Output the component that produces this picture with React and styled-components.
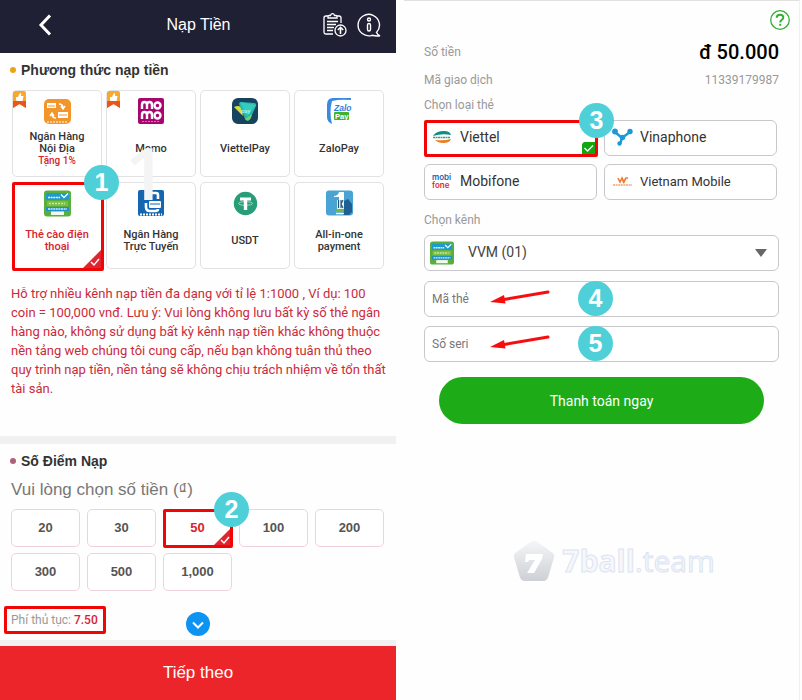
import React, { useState } from "react";
import styled, { createGlobalStyle, css } from "styled-components";

const GlobalStyle = createGlobalStyle`
  * {
    box-sizing: border-box;
  }
  body {
    margin: 0;
    background: #fefefe;
    font-family: "Liberation Sans", Arial, sans-serif;
  }
  button, input, select {
    font-family: inherit;
  }
`;

//LAYOUT
const Page = styled.main`
  display: grid;
  grid-template-columns: 1fr 1fr;
  gap: 8px;
  min-height: 100vh;
  padding-right: 2px;
`;

const DepositPanel = styled.section`
  display: flex;
  flex-direction: column;
`;

const CardPanel = styled.section`
  font-family: Roboto, sans-serif;
  border-top: 1px solid #e2dfe0;
  border-right: 1px solid #f1f1f3;
  padding: 9px 0 0 20px;
`;

//HEADER
const Header = styled.header`
  display: grid;
  grid-template-columns: 1fr auto 1fr;
  align-items: center;
  height: 53px;
  padding: 0 15px 4px 34px;
  background: #1f2034;
  color: #fff;
`;

const Title = styled.h1`
  margin: 0;
  padding-right: 18px;
  font-size: 16px;
  font-weight: 400;
`;

const IconButton = styled.button`
  display: flex;
  padding: 0;
  border: none;
  background: none;
  color: inherit;
  cursor: pointer;
`;

const HeaderActions = styled.div`
  display: flex;
  justify-content: flex-end;
  gap: 10px;
`;

//DEPOSIT PANEL
const Heading = styled.h2`
  display: flex;
  align-items: center;
  gap: 5px;
  margin: 0;
  padding: 0 10px;
  font-size: 14px;
  line-height: 20px;
  color: #333;

  &::before {
    content: "";
    width: 6px;
    height: 6px;
    border-radius: 50%;
    background: ${(props) => props.$dot};
  }
`;

const Block = styled.div`
  padding-top: ${(props) => props.$top}px;
`;

const MethodGrid = styled.div`
  position: relative;
  display: grid;
  grid-template-columns: repeat(4, 1fr);
  grid-auto-rows: 87px;
  gap: 5px 4px;
  padding: 10px 12px 0;
`;

const Tile = styled.button`
  position: relative;
  display: flex;
  flex-direction: column;
  align-items: center;
  padding: 7px 4px 3px;
  border: 1px solid #e2e2e4;
  border-radius: 5px;
  background: #fff;
  color: ${(props) => (props.$selected ? "#d8232f" : "#333")};
  font-family: Roboto, sans-serif;
  font-size: 11px;
  font-weight: 500;
  line-height: 12px;
  cursor: pointer;
`;

const TileLabel = styled.span`
  display: flex;
  flex-direction: column;
  justify-content: center;
  flex: 1;
  white-space: pre-line;
`;

const Promo = styled.span`
  font-size: 10px;
  color: #d8232f;
`;

const Ribbon = styled.svg`
  position: absolute;
  top: 0;
  left: 0;
`;

const Outline = styled.span`
  position: absolute;
  z-index: 1;
  top: -1px;
  left: -1px;
  right: ${(props) => props.$spread}px;
  bottom: ${(props) => props.$spread}px;
  border: 3px solid #f20505;
  border-radius: 2px;
  pointer-events: none;
`;

const Corner = styled.svg`
  position: absolute;
  right: 0;
  bottom: 0;
`;

const stepAtCorner = css`
  top: -18px;
  right: -18px;
`;

const stepInField = css`
  top: 0;
  left: 154px;
`;

const Step = styled.span`
  position: absolute;
  z-index: 2;
  ${(props) => (props.$inField ? stepInField : stepAtCorner)}
  width: 35px;
  height: 35px;
  border-radius: 50%;
  background: #4fd0d9;
  color: #fff;
  font-family: "Liberation Sans", Arial, sans-serif;
  font-size: 25px;
  font-weight: 700;
  line-height: 35px;
  text-align: center;
`;

const GhostMark = styled.span`
  position: absolute;
  z-index: 1;
  top: 52px;
  left: 125px;
  color: #f4f4f5;
  font-family: "Open Sans", sans-serif;
  font-size: 72px;
  font-weight: 600;
  line-height: 80px;
  pointer-events: none;
`;

const Notice = styled.p`
  margin: 0;
  padding: 15px 10px 38px 11px;
  font-family: Roboto, sans-serif;
  font-size: 13px;
  line-height: 19px;
  color: #cc2a3b;
`;

const Divider = styled.div`
  height: ${(props) => props.$size}px;
  background: #f1f1f1;
`;

const Prompt = styled.p`
  margin: 0;
  padding: 8px 11px;
  font-size: 17px;
  line-height: 22px;
  color: #777;
`;

const AmountGrid = styled.div`
  display: grid;
  grid-template-columns: repeat(5, 1fr);
  grid-auto-rows: 38px;
  gap: 6px 7px;
  padding: 0 12px 0 11px;
`;

const Amount = styled.button`
  position: relative;
  padding: 0 0 2px;
  border: 1px solid #f0d3da;
  border-radius: 5px;
  background: #fff;
  color: ${(props) => (props.$selected ? "#d8232f" : "#555")};
  font-size: 13px;
  font-weight: 700;
  cursor: pointer;
`;

const FeeRow = styled.div`
  display: grid;
  grid-template-columns: 1fr auto 1fr;
  align-items: start;
  padding: 15px 4px 4px;
`;

const Fee = styled.p`
  justify-self: start;
  margin: 0;
  padding: 0 5px 0 4px;
  border: 3px solid #f20505;
  border-radius: 2px;
  font-family: Roboto, sans-serif;
  font-size: 12px;
  line-height: 22px;
  color: #999;

  b {
    font-weight: 500;
    color: #d8232f;
  }
`;

const MoreButton = styled(IconButton)`
  margin-top: 6px;
`;

const NextButton = styled.button`
  flex: 1;
  min-height: 54px;
  padding: 0;
  border: none;
  background: #eb2529;
  color: #fff;
  font-size: 17px;
  cursor: pointer;
`;

//CARD PANEL
const HelpRow = styled.div`
  display: flex;
  justify-content: flex-end;
  padding-right: 9px;
`;

const InfoRow = styled.div`
  display: flex;
  justify-content: space-between;
  align-items: center;
  height: 28px;
  padding-right: 20px;
  font-size: 12px;
  color: #999;
`;

const Total = styled.strong`
  font-size: 20px;
  font-weight: 500;
  color: #000;
`;

const Caption = styled.div`
  display: block;
  padding: ${(props) => props.$top}px 0 4px;
  font-size: 12px;
  line-height: 22px;
  color: #999;
`;

const Fields = styled.div`
  padding-right: 20px;
`;

const CarrierGrid = styled.div`
  display: grid;
  grid-template-columns: 1fr 1fr;
  gap: 8px 7px;
  padding-right: 2px;
`;

const Carrier = styled.button`
  position: relative;
  display: flex;
  align-items: center;
  gap: 6px;
  height: 36px;
  padding: 0 6px 2px;
  border: 1px solid #c8c8cc;
  border-radius: 6px;
  background: #fff;
  color: #333;
  font-size: ${(props) => (props.$small ? 13 : 14)}px;
  cursor: pointer;
`;

const CheckMark = styled.svg`
  position: absolute;
  right: 1px;
  bottom: 1px;
`;

const SelectBox = styled.div`
  position: relative;
`;

const ChannelSelect = styled.select`
  appearance: none;
  display: block;
  width: 100%;
  height: 36px;
  padding: 0 40px 2px 43px;
  border: 1px solid #c8c8cc;
  border-radius: 6px;
  background: #fff;
  color: #444;
  font-size: 14px;
`;

const ChannelIcon = styled.span`
  position: absolute;
  top: 6px;
  left: 6px;
  pointer-events: none;
`;

const Caret = styled.svg`
  position: absolute;
  top: 14px;
  right: 12px;
  pointer-events: none;
`;

const FieldBox = styled.div`
  position: relative;
  margin-top: ${(props) => props.$gap}px;
`;

const TextField = styled.input`
  display: block;
  width: 100%;
  height: 36px;
  padding: 0 7px;
  border: 1px solid #c8c8cc;
  border-radius: 6px;
  background: #fff;
  font-size: 12px;

  &::placeholder {
    color: #777;
  }
`;

const Arrow = styled.svg`
  position: absolute;
  top: 8px;
  left: 66px;
  pointer-events: none;
`;

const PayButton = styled.button`
  display: block;
  width: calc(100% - 30px);
  height: 47px;
  margin: 15px auto 0;
  border: none;
  border-radius: 24px;
  background: #1dac18;
  color: #fff;
  font-size: 14px;
  cursor: pointer;
`;

const Watermark = styled.div`
  display: flex;
  justify-content: center;
  align-items: center;
  gap: 6px;
  padding: 115px 0 0 24px;
  color: #f5f7fb;
  font-family: "Open Sans", sans-serif;
  font-size: 30px;
  line-height: 44px;
  -webkit-text-stroke: 1px #dde4f1;

  b {
    font-weight: 700;
  }
`;

//ICONS
const BankIcon = () => (
  <svg width="27" height="27" viewBox="0 0 27 27">
    <rect y="1" width="27" height="25" rx="5" fill="#f2962b" />
    <path d="M3 5h9v5H3zM14 14h10v6H14z" fill="#fff" />
    <path d="M4 8h7M15 17h8" stroke="#f2962b" />
    <path d="M15 6q4 0 4 4m-2-2l2 3 2-3M12 20q-4 0-4-4m-2 2l2-3 2 3" fill="none" stroke="#fff" strokeWidth="1.4" />
    <path d="M3 24h21" stroke="#fbdcb5" strokeWidth="1.5" strokeDasharray="2 1" />
  </svg>
);

const MomoIcon = () => (
  <svg width="27" height="27" viewBox="0 0 27 27">
    <rect width="26" height="26" rx="2" fill="#a9056f" />
    <g fill="none" stroke="#fff" strokeWidth="2.4">
      <path d="M4 11V7q0-3 2.500-3T9 7v4M9 7q0-3 2.500-3T14 7v4" />
      <circle cx="19.500" cy="7.500" r="3" />
      <path d="M4 21v-4q0-3 2.500-3T9 17v4M9 17q0-3 2.500-3t2.500 3v4" />
      <circle cx="19.500" cy="17.500" r="3" />
    </g>
    <path d="M4 23.500h18" stroke="#d673b4" strokeDasharray="2 1" />
  </svg>
);

const ViettelPayIcon = () => (
  <svg width="27" height="27" viewBox="0 0 27 27">
    <rect width="26" height="26" rx="6" fill="#17435f" />
    <path d="M2 9q4-2 7 0l2 9z" fill="#d8dc3a" />
    <path d="M7 6q0-2 2-2l13 1q3 0 2 3l-6 13q-2 3-5 0z" fill="#23b9ac" />
    <path d="M8 4l16 3-9 11z" fill="#3fd8ca" opacity=".6" />
    <path d="M13 21q3 4 6-1l1-4z" fill="#6fd15f" />
    <text x="9" y="15" fontSize="6" fontFamily="Roboto" fill="#b9f3ee">pay</text>
  </svg>
);

const ZaloIcon = () => (
  <svg width="27" height="27" viewBox="0 0 27 27">
    <path d="M25 0H7Q1 0 1 7v12q0 5 5 7Q3 14 6 3q8-2 19-1z" fill="#3a8be0" />
    <text x="8" y="12.500" fontSize="8.500" fontWeight="700" fontStyle="italic" fontFamily="Liberation Sans" fill="#2d7fdc">Zalo</text>
    <rect x="8" y="14" width="15" height="8" rx="1" fill="#3fb02f" />
    <text x="9" y="20.500" fontSize="7.500" fontWeight="700" fontFamily="Liberation Sans" fill="#fff">Pay</text>
  </svg>
);

const PhoneCardIcon = ({ size = 27 }) => (
  <svg width={size} height={size} viewBox="0 0 27 27">
    <rect y=".5" width="27" height="26" rx="3" fill="#5aae3c" />
    <rect x="2" y="3" width="23" height="7" fill="#1d9bd0" />
    <path d="M4 7.500h12" stroke="#e2f5fb" strokeWidth="1.600" strokeDasharray="2 .6" />
    <path d="M17 4.500l3 3 4-4" fill="none" stroke="#fff" strokeWidth="1.300" />
    <rect x="3" y="11" width="21" height="5" rx="1" fill="#79bf48" />
    <path d="M5 13.500h16" stroke="#c9e7a9" strokeWidth="1.500" strokeDasharray="2 1" />
    <rect x="2" y="17" width="23" height="4" fill="#1b91c8" />
    <path d="M4 19h19" stroke="#d6eefa" strokeWidth="1.500" strokeDasharray="2 .6" />
    <rect x="7" y="21.500" width="13" height="3.500" fill="#f1fbe9" />
  </svg>
);

const OnlineIcon = () => (
  <svg width="27" height="27" viewBox="0 0 27 27">
    <rect width="26" height="26" rx="2" fill="#1466b0" />
    <path d="M10 9V6q0-3 3-3h5q2 0 2 2v4M8 13v4q0 4 4 4h5q3 0 3-2" fill="none" stroke="#fff" strokeWidth="2.600" />
    <rect x="11" y="11" width="12" height="7" rx="1" fill="#fff" />
    <path d="M12 14h10" stroke="#1466b0" />
    <path d="M2 24.500h22" stroke="#fff" strokeWidth="2" strokeDasharray="2 1" />
  </svg>
);

const UsdtIcon = () => (
  <svg width="27" height="27" viewBox="0 0 27 27">
    <circle cx="13.500" cy="13.500" r="11.700" fill="#279e78" />
    <ellipse cx="13.500" cy="13.500" rx="7" ry="1.800" fill="none" stroke="#b9e2d4" strokeWidth=".8" />
    <path d="M8 7.500h11v3h-3.800V20h-3.400v-9.500H8z" fill="#fff" />
  </svg>
);

const AllInOneIcon = () => (
  <svg width="27" height="27" viewBox="0 0 27 27">
    <rect y=".5" width="27" height="25" rx="3" fill="#4aa3d5" />
    <path d="M18 11l4-2 4 5v8l-3 3h-6z" fill="#1f5f94" />
    <path d="M8 6q4 0 5-4h5v8h-5V7H8z" fill="#fff" />
    <rect x="11" y="10" width="7" height="9" fill="#e6f1f8" />
    <path d="M12.500 10v8M15 10v8M17 10l-2 4 2 4" fill="none" stroke="#24506f" strokeWidth="1.100" />
    <rect x="10" y="19" width="8" height="3" fill="#76b73a" />
    <path d="M10 23.500h8" stroke="#fff" strokeWidth="1.500" />
  </svg>
);

const ViettelIcon = () => (
  <svg width="23" height="20" viewBox="0 0 23 20">
    <path d="M2 9q3-5 11-5 6 0 7 4-9-2-18 1z" fill="#118c80" />
    <path d="M20 12q-1 4-8 4-5 0-8-3 9 1 16-1z" fill="#ee7d23" />
    <path d="M2 10.500h17" stroke="#3a9b95" strokeWidth="1.500" strokeDasharray="2 .5" />
  </svg>
);

const VinaIcon = () => (
  <svg width="23" height="20" viewBox="0 0 23 20">
    <path d="M4 5l7 6 8-6M11 11l-2 6" fill="none" stroke="#1b9ad9" strokeWidth="2.400" />
    <g fill="#1b9ad9">
      <circle cx="4" cy="4.500" r="2.900" />
      <circle cx="19" cy="4.500" r="2.700" />
      <circle cx="11.500" cy="10.500" r="2.700" />
      <circle cx="8.500" cy="16.500" r="2.200" />
    </g>
  </svg>
);

const MobifoneIcon = () => (
  <svg width="23" height="20" viewBox="0 0 23 20">
    <text x="1" y="9" fontSize="8" fontWeight="600" fontFamily="Inter" fill="#1c62b0">mobi</text>
    <text x="1" y="17" fontSize="8" fontWeight="600" fontFamily="Inter" fill="#e32636">fone</text>
  </svg>
);

const VietnamMobileIcon = () => (
  <svg width="23" height="20" viewBox="0 0 23 20">
    <path d="M7 7l2 4 2-4 2 4 2-4M11 7l1.500 4L15 7h2" fill="none" stroke="#ee7b30" strokeWidth="1.600" />
    <path d="M2 14h19" stroke="#f0a56f" strokeWidth="1.600" strokeDasharray="2 .6" />
  </svg>
);

const TileCorner = () => (
  <Corner width="18" height="18" viewBox="0 0 18 18">
    <path d="M18 0v18H0z" fill="#e02430" />
    <path d="M8 12l3 3 5-6" fill="none" stroke="#fff" strokeWidth="1.500" />
  </Corner>
);

//DATA
const methods = [
  { id: "bank", label: "Ngân Hàng\nNội Địa", icon: BankIcon, promo: "Tặng 1%", hot: true },
  { id: "momo", label: "Momo", icon: MomoIcon, hot: true },
  { id: "viettelpay", label: "ViettelPay", icon: ViettelPayIcon },
  { id: "zalopay", label: "ZaloPay", icon: ZaloIcon },
  { id: "phone", label: "Thẻ cào điện\nthoại", icon: PhoneCardIcon },
  { id: "online", label: "Ngân Hàng\nTrực Tuyến", icon: OnlineIcon },
  { id: "usdt", label: "USDT", icon: UsdtIcon },
  { id: "all", label: "All-in-one\npayment", icon: AllInOneIcon },
];

const amounts = ["20", "30", "50", "100", "200", "300", "500", "1,000"];

const carriers = [
  { label: "Viettel", icon: ViettelIcon },
  { label: "Vinaphone", icon: VinaIcon },
  { label: "Mobifone", icon: MobifoneIcon },
  { label: "Vietnam Mobile", icon: VietnamMobileIcon, small: true },
];

const DepositForm = () => {
  const [method, setMethod] = useState("phone");
  const [amount, setAmount] = useState("50");

  return (
    <DepositPanel>
      <Header>
        <IconButton aria-label="Quay lại">
          <svg width="20" height="22" viewBox="0 0 20 22" fill="none" stroke="#fff" strokeWidth="3">
            <path d="M16 1.500L7 11l9 9.500" />
          </svg>
        </IconButton>
        <Title>Nạp Tiền</Title>
        <HeaderActions>
          <IconButton aria-label="Lịch sử nạp">
            <svg width="24" height="24" viewBox="0 0 24 24" fill="none" stroke="#fff" strokeWidth="1.300">
              <path d="M10 21H3q-2 0-2-2V5q0-2 2-2h2M14 3h2q2 0 2 2v5" />
              <path d="M5 5V3.500q0-1 1-1h1.500Q8 .7 9.500.7t2 1.800H13q1 0 1 1V5z" />
              <path d="M4 8.500h11M4 11.500h9M4 14.500h7M4 17.500h6" />
              <circle cx="17.500" cy="17.500" r="5.500" />
              <path d="M17.500 21v-6.500M14.800 17l2.700-2.700 2.700 2.700" strokeWidth="1.600" />
            </svg>
          </IconButton>
          <IconButton aria-label="Thông tin">
            <svg width="24" height="24" viewBox="0 0 24 24" fill="none" stroke="#fff" strokeWidth="1.400">
              <path d="M19.500 19.500A10.700 10.700 0 1 0 15 22.300q4 1 8 .5-2.500-1-3.500-3.300z" />
              <circle cx="12" cy="6.500" r="1.500" />
              <rect x="10.500" y="10.500" width="3" height="7.500" rx="1.500" />
            </svg>
          </IconButton>
        </HeaderActions>
      </Header>

      <Block $top={7}>
        <Heading $dot="#eca414">Phương thức nạp tiền</Heading>
        <MethodGrid>
          {methods.map(({ id, label, icon: Icon, promo, hot }) => (
            <Tile key={id} $selected={id === method} onClick={() => setMethod(id)}>
              {hot && (
                <Ribbon width="13" height="17" viewBox="0 0 13 17">
                  <path d="M0 2q0-2 2-2h9q2 0 2 2v15l-6.500-4L0 17z" fill="#f8a92c" />
                  <path d="M0 10h13v7l-6.500-4L0 17z" fill="#ea5420" />
                  <path d="M3 6h2l2-4q1.500 0 1 3h2.500l-1 5H5L3 9.500z" fill="#fff" />
                </Ribbon>
              )}
              <Icon />
              <TileLabel>
                {label}
                {promo && <Promo>{promo}</Promo>}
              </TileLabel>
              {id === method && (
                <>
                  <TileCorner />
                  <Outline $spread={-3} />
                  <Step>1</Step>
                </>
              )}
            </Tile>
          ))}
          <GhostMark>1</GhostMark>
        </MethodGrid>
      </Block>
      <Notice>
        Hỗ trợ nhiều kênh nạp tiền đa dạng với tỉ lệ 1:1000 , Ví dụ: 100 coin = 100,000 vnđ. Lưu ý: Vui lòng
        không lưu bất kỳ số thẻ ngân hàng nào, không sử dụng bất kỳ kênh nạp tiền khác không thuộc nền tảng web
        chúng tôi cung cấp, nếu bạn không tuân thủ theo quy trình nạp tiền, nền tảng sẽ không chịu trách nhiệm
        về tổn thất tài sản.
      </Notice>

      <Divider $size={8} />
      <Block $top={7}>
        <Heading $dot="#b0607f">Số Điểm Nạp</Heading>
        <Prompt>Vui lòng chọn số tiền (₫)</Prompt>
        <AmountGrid>
          {amounts.map((value) => (
            <Amount key={value} $selected={value === amount} onClick={() => setAmount(value)}>
              {value}
              {value === amount && (
                <>
                  <TileCorner />
                  <Outline $spread={-2} />
                  <Step>2</Step>
                </>
              )}
            </Amount>
          ))}
        </AmountGrid>
        <FeeRow>
          <Fee>
            Phí thủ tục: <b>7.50</b>
          </Fee>
          <MoreButton aria-label="Xem thêm">
            <svg width="24" height="24" viewBox="0 0 24 24">
              <circle cx="12" cy="12" r="12" fill="#0d94f3" />
              <path d="M7 10.500l5 5 5-5" fill="none" stroke="#fff" strokeWidth="2" />
            </svg>
          </MoreButton>
        </FeeRow>
      </Block>
      <Divider $size={6} />
      <NextButton>Tiếp theo</NextButton>
    </DepositPanel>
  );
};

const RedArrow = () => (
  <Arrow width="60" height="18" viewBox="0 0 60 18">
    <path d="M58 3L14 10.500" stroke="#f80d0d" strokeWidth="3" strokeLinecap="round" />
    <path d="M0 13l14-7 1.500 8.500z" fill="#f80d0d" />
  </Arrow>
);

const CardForm = () => {
  const [carrier, setCarrier] = useState("Viettel");
  const [code, setCode] = useState("");
  const [serial, setSerial] = useState("");

  return (
    <CardPanel>
      <HelpRow>
        <IconButton aria-label="Trợ giúp">
          <svg width="20" height="20" viewBox="0 0 20 20" fill="none" stroke="#36ab36">
            <circle cx="10" cy="10" r="9.300" strokeWidth="1.300" />
            <path d="M6.700 7.700q0-3 3.300-3t3.300 2.800q0 1.400-1.700 2.500-1.400 1-1.400 2.400" strokeWidth="2" />
            <path d="M10.200 13.800v2" strokeWidth="2" />
          </svg>
        </IconButton>
      </HelpRow>
      <Block $top={8}>
        <InfoRow>
          <span>Số tiền</span>
          <Total>đ 50.000</Total>
        </InfoRow>
        <InfoRow>
          <span>Mã giao dịch</span>
          <span>11339179987</span>
        </InfoRow>
      </Block>
      <Fields>
        <Caption $top={0}>Chọn loại thẻ</Caption>
        <CarrierGrid>
          {carriers.map(({ label, icon: Icon, small }) => (
            <Carrier key={label} $small={small} onClick={() => setCarrier(label)}>
              <Icon />
              {label}
              {label === carrier && (
                <>
                  <CheckMark width="13" height="12" viewBox="0 0 13 12">
                    <path d="M2 0h11v12H0V2z" fill="#12a612" />
                    <path d="M2.500 6l3 3 5.500-5.500" fill="none" stroke="#fff" strokeWidth="1.300" />
                  </CheckMark>
                  <Outline $spread={-2} />
                  <Step>3</Step>
                </>
              )}
            </Carrier>
          ))}
        </CarrierGrid>
        <Caption as="label" htmlFor="channel" $top={9}>
          Chọn kênh
        </Caption>
        <SelectBox>
          <ChannelSelect id="channel">
            <option>VVM (01)</option>
          </ChannelSelect>
          <ChannelIcon>
            <PhoneCardIcon size={24} />
          </ChannelIcon>
          <Caret width="12" height="8" viewBox="0 0 12 8">
            <path d="M0 0h12L6 8z" fill="#666" />
          </Caret>
        </SelectBox>
        <FieldBox $gap={10}>
          <TextField
            aria-label="Mã thẻ"
            placeholder="Mã thẻ"
            value={code}
            onChange={(e) => setCode(e.target.value)}
          />
          <RedArrow />
          <Step $inField>4</Step>
        </FieldBox>
        <FieldBox $gap={9}>
          <TextField
            aria-label="Số seri"
            placeholder="Số seri"
            value={serial}
            onChange={(e) => setSerial(e.target.value)}
          />
          <RedArrow />
          <Step $inField>5</Step>
        </FieldBox>
        <PayButton>Thanh toán ngay</PayButton>
        <Watermark>
          <svg width="44" height="42" viewBox="0 0 44 42">
            <defs>
              <linearGradient id="ball" x1="0" y1="0" x2="0" y2="1">
                <stop offset="0" stopColor="#f5f6f8" />
                <stop offset="1" stopColor="#cdd0d4" />
              </linearGradient>
            </defs>
            <path d="M19 1.500q3-1.500 6 0l15 11q3 2 2 5l-6 20q-1 3-4 3.500H12q-3-.5-4-3.500l-6-20q-1-3 2-5z" fill="url(#ball)" />
            <path d="M14 14h17l-1 5-8 14h-7l8-13h-6l-1 2h-3z" fill="#fff" />
          </svg>
          <span>
            <b>7ball</b>.team
          </span>
        </Watermark>
      </Fields>
    </CardPanel>
  );
};

const App = () => (
  <>
    <GlobalStyle />
    <Page>
      <DepositForm />
      <CardForm />
    </Page>
  </>
);

export default App;
